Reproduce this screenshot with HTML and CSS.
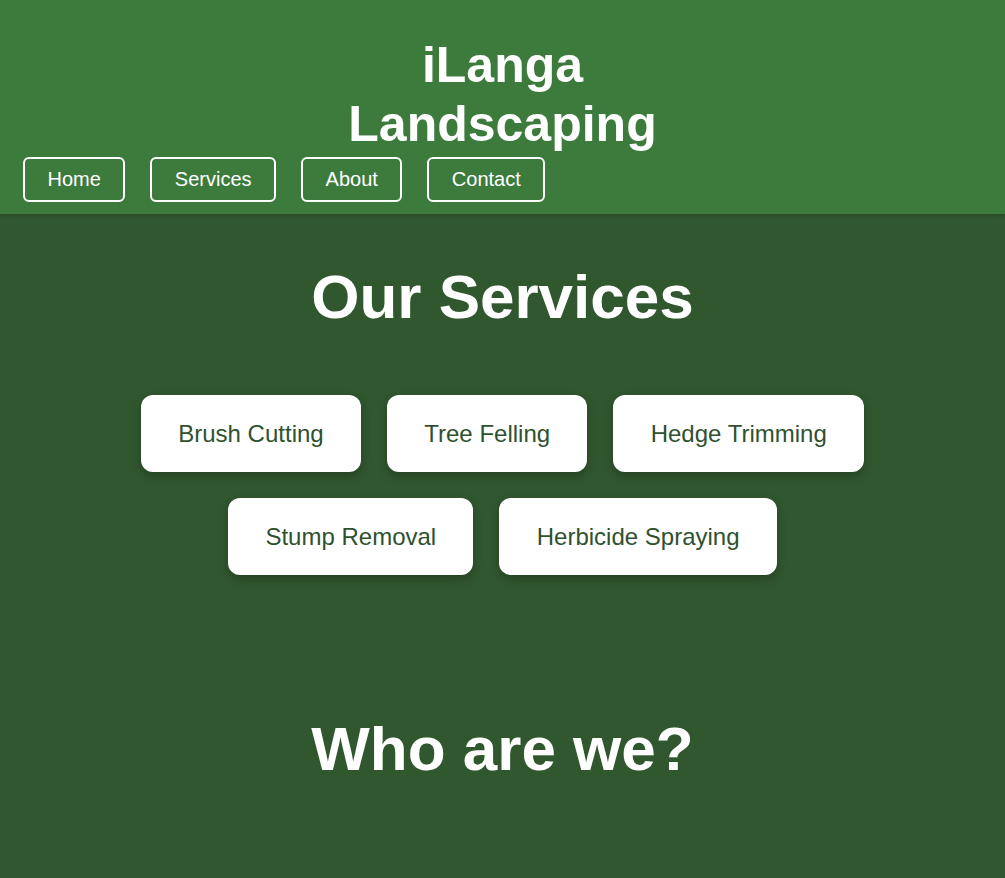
FILE: index.html
```html
<!DOCTYPE html>
<html lang="en">
<head>
<meta charset="utf-8">
<title>iLanga Landscaping</title>
<link rel="stylesheet" href="styles.css">
</head>
<body>
<header class="site-header">
  <h1 class="brand">iLanga Landscaping</h1>
  <nav class="nav">
    <a class="nav-btn" href="#">Home</a>
    <a class="nav-btn" href="#">Services</a>
    <a class="nav-btn" href="#">About</a>
    <a class="nav-btn" href="#">Contact</a>
  </nav>
</header>
<main class="content">
  <section class="services">
    <h2 class="section-title">Our Services</h2>
    <div class="service-list">
      <div class="service-card">Brush Cutting</div>
      <div class="service-card">Tree Felling</div>
      <div class="service-card">Hedge Trimming</div>
      <div class="service-card">Stump Removal</div>
      <div class="service-card">Herbicide Spraying</div>
    </div>
  </section>
  <section class="about">
    <h2 class="section-title">Who are we?</h2>
  </section>
</main>
</body>
</html>
```

FILE: styles.css
```css
html, body {
  margin: 0;
  padding: 0;
}
body {
  background: #31572f;
  font-family: "Liberation Sans", Arial, sans-serif;
  color: #ffffff;
  height: 878px;
  overflow: hidden;
}
.site-header {
  background: #3d7b3d;
  padding: 36px 23px 12px;
  box-shadow: 0 2px 4px rgba(0, 0, 0, 0.15);
  position: relative;
}
.brand {
  margin: 0 auto;
  width: 330px;
  text-align: center;
  font-size: 50px;
  font-weight: bold;
  line-height: 58.5px;
}
.nav {
  display: flex;
  gap: 25px;
  margin-top: 4px;
}
.nav-btn {
  display: block;
  border: 2px solid #ffffff;
  border-radius: 6px;
  padding: 9px 22.5px;
  color: #ffffff;
  text-decoration: none;
  font-size: 20px;
  line-height: 23px;
}
.services {
  padding-top: 47px;
}
.section-title {
  margin: 0;
  text-align: center;
  font-size: 62px;
  font-weight: bold;
  line-height: 71px;
}
.service-list {
  display: flex;
  flex-wrap: wrap;
  justify-content: center;
  gap: 26px;
  max-width: 820px;
  margin: 63px auto 0;
}
.service-card {
  background: #ffffff;
  color: #2f5130;
  font-size: 24px;
  line-height: 27px;
  padding: 25px 37.3px;
  border-radius: 12px;
  box-shadow: 0 4px 10px rgba(0, 0, 0, 0.25);
}
.about {
  padding-top: 138px;
}
```
